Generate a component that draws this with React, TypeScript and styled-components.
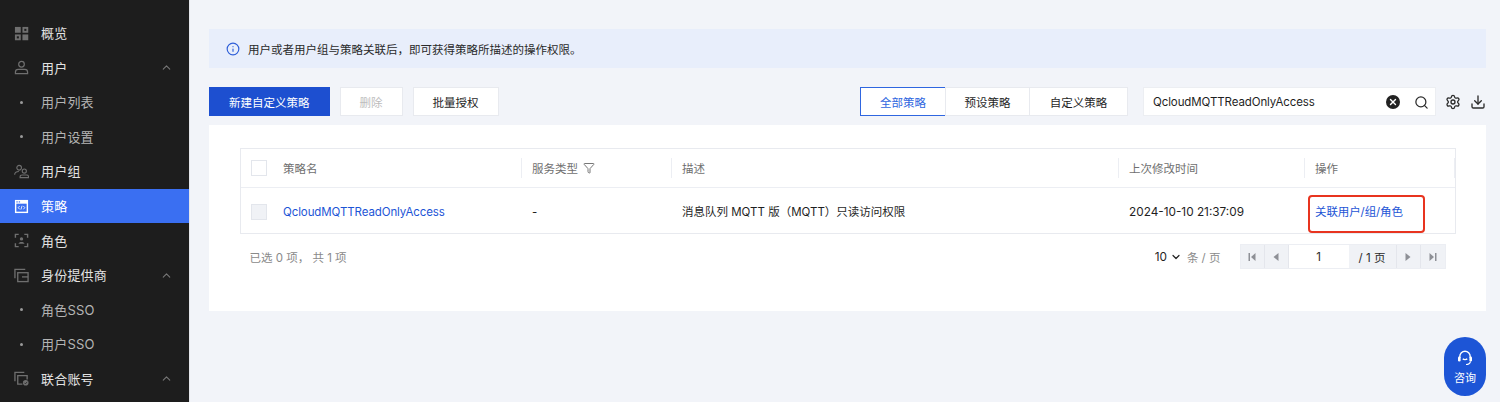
import React from "react";
import styled, { createGlobalStyle } from "styled-components";
import { ChevronUp, ChevronDown, Search, Settings, Download, Filter, Info, X } from "lucide-react";

const GlobalStyle = createGlobalStyle`
  html, body {
    margin: 0;
    padding: 0;
    height: 402px;
    overflow: hidden;
    background: #f2f4f9;
    font-family: Inter, "Noto Sans CJK SC", sans-serif;
    font-size: 11.5px;
    color: #1f1f1f;
  }
  * { box-sizing: border-box; }
`;

const Page = styled.div`
  display: flex;
  width: 1500px;
  height: 402px;
  position: relative;
  overflow: hidden;
`;

const Sidebar = styled.nav`
  width: 190px;
  flex: none;
  height: 402px;
  padding-top: 16px;
  background: #1d1d1d;
  border-right: 1px solid #e4e6ea;
  overflow: hidden;
`;

const NavRow = styled.div<{ $active?: boolean; $sub?: boolean }>`
  display: flex;
  align-items: center;
  height: 34.55px;
  padding-left: 14px;
  padding-right: 16px;
  gap: 12px;
  font-size: 13px;
  line-height: 18px;
  background: ${(p) => (p.$active ? "#3a6ff2" : "transparent")};
  color: ${(p) => (p.$active ? "#ffffff" : p.$sub ? "#b4b4b4" : "#e2e2e2")};
`;

const NavIcon = styled.svg<{ $active?: boolean }>`
  width: 15px;
  height: 15px;
  flex: none;
  color: ${(p) => (p.$active ? "#ffffff" : "#6f6f6f")};
`;

const NavDot = styled.span`
  width: 15px;
  flex: none;
  display: flex;
  justify-content: center;
  &::before {
    content: "";
    width: 3px;
    height: 3px;
    border-radius: 50%;
    background: #9a9a9a;
  }
`;

const NavLabel = styled.span`
  flex: 1;
  letter-spacing: 0.2px;
`;

const Main = styled.main`
  flex: 1;
  padding: 29px 14px 0 19px;
  min-width: 0;
`;

const Notice = styled.div`
  display: flex;
  align-items: center;
  gap: 8px;
  height: 39px;
  padding-left: 17px;
  background: #e8eefb;
  color: #2a2a2a;
`;

const Toolbar = styled.div`
  display: flex;
  align-items: center;
  height: 29px;
  margin-top: 19px;
  margin-bottom: 9px;
`;

const Button = styled.button<{ $kind?: "primary" | "disabled" }>`
  height: 29px;
  padding: 0 19px;
  margin-right: 10px;
  font: inherit;
  border: 1px solid ${(p) => (p.$kind === "primary" ? "#1d4fd0" : "#e8eaef")};
  background: ${(p) => (p.$kind === "primary" ? "#1d4fd0" : "#ffffff")};
  color: ${(p) => (p.$kind === "primary" ? "#ffffff" : p.$kind === "disabled" ? "#bcbcbc" : "#1f1f1f")};
`;

const Spacer = styled.div`
  flex: 1;
`;

const Segments = styled.div`
  display: flex;
  margin-right: 15px;
`;

const Segment = styled.div<{ $active?: boolean; $width: number }>`
  display: flex;
  align-items: center;
  justify-content: center;
  height: 29px;
  width: ${(p) => p.$width}px;
  background: #ffffff;
  border: 1px solid ${(p) => (p.$active ? "#2f66e0" : "#e8eaef")};
  margin-left: -1px;
  color: ${(p) => (p.$active ? "#2f66e0" : "#1f1f1f")};
`;

const SearchBox = styled.div`
  display: flex;
  align-items: center;
  width: 293px;
  height: 29px;
  padding: 1px 6px 0 9px;
  background: #ffffff;
  border: 1px solid #eceef2;
`;

const SearchText = styled.span`
  flex: 1;
  letter-spacing: -0.1px;
`;

const ClearDot = styled.span`
  display: flex;
  align-items: center;
  justify-content: center;
  width: 14px;
  height: 14px;
  margin-right: 14px;
  border-radius: 50%;
  background: #222222;
  color: #ffffff;
`;

const ToolIcons = styled.div`
  display: flex;
  align-items: center;
  gap: 9px;
  margin-left: 9px;
  color: #2b2b2b;
`;

const Card = styled.section`
  height: 186px;
  background: #ffffff;
  padding: 23px 31px 0;
`;

const Table = styled.div`
  border: 1px solid #e8eaef;
  width: 1216px;
`;

const HeadRow = styled.div`
  display: grid;
  grid-template-columns: 281px 150px 447px 186px 1fr;
  height: 39px;
  border-bottom: 1px solid #eceef3;
  color: #6f6f6f;
`;

const BodyRow = styled.div`
  display: grid;
  grid-template-columns: 281px 150px 447px 186px 1fr;
  height: 45px;
  line-height: 18px;
`;

const HeadCell = styled.div`
  display: flex;
  align-items: center;
  padding-left: 10px;
  position: relative;
  &::after {
    content: "";
    position: absolute;
    right: 0;
    top: 9px;
    bottom: 9px;
    width: 1px;
    background: #eceef3;
  }
`;

const HeadFilter = styled(Filter)`
  margin-left: 5px;
  color: #777777;
`;

const BodyCell = styled.div`
  display: flex;
  align-items: center;
  padding-left: 10px;
  padding-top: 2px;
`;

const DateText = styled.span`
  font-size: 11.8px;
`;

const Check = styled.span<{ $disabled?: boolean }>`
  width: 16px;
  height: 16px;
  margin-right: 16px;
  flex: none;
  border: 1px solid #e3e6ec;
  background: ${(p) => (p.$disabled ? "#f0f2f6" : "#ffffff")};
`;

const LinkText = styled.span`
  color: #1d55d6;
  letter-spacing: -0.1px;
`;

const Highlight = styled.div`
  position: absolute;
  left: 1308px;
  top: 195px;
  width: 117px;
  height: 38px;
  border: 2px solid #e8341f;
  border-radius: 4px;
`;

const Footer = styled.div`
  display: flex;
  align-items: center;
  justify-content: space-between;
  padding: 10px 9.5px 0;
  color: #8a8a8a;
`;

const Pager = styled.div`
  display: flex;
  align-items: center;
`;

const PageSize = styled.div`
  display: flex;
  align-items: center;
  gap: 3px;
  margin-right: 19px;
`;

const PageSizeValue = styled.span`
  color: #1f1f1f;
  font-size: 11.8px;
`;

const PageSizeUnit = styled.span`
  margin-left: 2px;
`;

const PagerBox = styled.div`
  display: flex;
  height: 25px;
  background: #f0f2f6;
  border: 1px solid #eceef3;
  color: #2a2a2a;
`;

const PagerBtn = styled.span`
  width: 24px;
  display: flex;
  align-items: center;
  justify-content: center;
  color: #8e9096;
  border-right: 1px solid #e4e6ec;
  &:last-child {
    border-right: 0;
  }
`;

const PagerInput = styled.span`
  width: 60px;
  display: flex;
  align-items: center;
  justify-content: center;
  background: #ffffff;
`;

const PagerTotal = styled.span`
  width: 48px;
  display: flex;
  align-items: center;
  justify-content: center;
  border-right: 1px solid #e4e6ec;
`;

const Consult = styled.div`
  position: absolute;
  left: 1444px;
  top: 337px;
  width: 42px;
  height: 59px;
  border-radius: 21px;
  background: #1d55d6;
  color: #ffffff;
  font-size: 11px;
  display: flex;
  flex-direction: column;
  align-items: center;
  justify-content: center;
  gap: 2px;
`;

const columns = ["服务类型", "描述", "上次修改时间", "操作"];

const iconPaths: Record<string, React.ReactNode> = {
  overview: (
    <>
      <rect x="1" y="1" width="6.2" height="6.2" fill="currentColor" />
      <rect x="9" y="1" width="6.2" height="6.2" fill="currentColor" />
      <rect x="11" y="3" width="2.2" height="2.2" fill="#1d1d1d" />
      <rect x="1" y="9" width="6.2" height="6.2" fill="currentColor" />
      <rect x="3" y="11" width="2.2" height="2.2" fill="#1d1d1d" />
      <rect x="9" y="9" width="6.2" height="6.2" fill="currentColor" />
    </>
  ),
  user: (
    <>
      <circle cx="8" cy="4.5" r="3" fill="none" stroke="currentColor" strokeWidth="1.3" />
      <path d="M1.5 14.5v-1.5c0-1.6 1.2-3 3-3h7c1.8 0 3 1.4 3 3v1.500z" fill="none" stroke="currentColor" strokeWidth="1.3" />
    </>
  ),
  group: (
    <>
      <circle cx="5.5" cy="4" r="2.5" fill="none" stroke="currentColor" strokeWidth="1.2" />
      <path d="M.7 11.500c0-2 1.500-3.500 4.500-3.500" fill="none" stroke="currentColor" strokeWidth="1.2" />
      <circle cx="11" cy="7.500" r="2.200" fill="none" stroke="currentColor" strokeWidth="1.2" />
      <path d="M6.500 14.500v-1c0-1 1-1.800 2.200-1.800h4.600c1.200 0 2.200.8 2.200 1.800v1z" fill="none" stroke="currentColor" strokeWidth="1.2" />
    </>
  ),
  policy: (
    <>
      <rect x="1" y="1" width="14" height="14" fill="currentColor" />
      <rect x="2.5" y="5" width="11" height="8.500" fill="#3a6ff2" />
      <rect x="2.500" y="2.500" width="1.500" height="1.200" fill="#3a6ff2" />
      <rect x="5" y="2.500" width="1.500" height="1.200" fill="#3a6ff2" />
      <path d="M6 7.500 4.500 9.200 6 11M10 7.500l1.500 1.700L10 11M8.600 7.200 7.400 11.200" fill="none" stroke="#fff" strokeWidth=".9" />
    </>
  ),
  role: (
    <>
      <path d="M1.500 5V1.500h3.500M11 1.500h3.500V5M14.500 11v3.500H11M5 14.500H1.500V11" fill="none" stroke="currentColor" strokeWidth="1.500" />
      <circle cx="8" cy="6.300" r="1.800" fill="currentColor" />
      <path d="M4.800 11.500c.3-1.500 1.500-2 3.200-2s2.900.5 3.200 2z" fill="currentColor" />
    </>
  ),
  idp: (
    <>
      <path d="M1 11V1.500h11" fill="none" stroke="currentColor" strokeWidth="1.400" />
      <rect x="4" y="5" width="11" height="9.500" fill="none" stroke="currentColor" strokeWidth="1.400" />
      <path d="M8.500 9.500h6.500" stroke="currentColor" strokeWidth="1.400" />
    </>
  ),
  org: (
    <>
      <path d="M1 11V1.500h10" fill="none" stroke="currentColor" strokeWidth="1.400" />
      <path d="M9 14H4V5h10v4" fill="none" stroke="currentColor" strokeWidth="1.400" />
      <circle cx="12.500" cy="12.500" r="3" fill="currentColor" />
      <path d="M11 12.500l1.200 1.200 1.900-2.200" fill="none" stroke="#1d1d1d" strokeWidth=".8" />
    </>
  ),
};

type NavItem = { label: string; icon?: string; sub?: boolean; open?: boolean; active?: boolean };

const navItems: NavItem[] = [
  { label: "概览", icon: "overview" },
  { label: "用户", icon: "user", open: true },
  { label: "用户列表", sub: true },
  { label: "用户设置", sub: true },
  { label: "用户组", icon: "group" },
  { label: "策略", icon: "policy", active: true },
  { label: "角色", icon: "role" },
  { label: "身份提供商", icon: "idp", open: true },
  { label: "角色SSO", sub: true },
  { label: "用户SSO", sub: true },
  { label: "联合账号", icon: "org", open: true },
];

const pagerPaths = {
  first: "M1.500 1h1.500v8H1.500zM8.500 1v8L4 5z",
  prev: "M7.500 1v8L2.500 5z",
  next: "M2.500 1v8l5-4z",
  last: "M7 1h1.500v8H7zM1.500 1v8L6 5z",
};

function PagerIcon({ name }: { name: keyof typeof pagerPaths }) {
  return (
    <svg width="10" height="10" viewBox="0 0 10 10" fill="currentColor">
      <path d={pagerPaths[name]} />
    </svg>
  );
}

export default function App() {
  return (
    <Page>
      <GlobalStyle />
      <Sidebar>
        {navItems.map((item) => (
          <NavRow key={item.label} $active={item.active} $sub={item.sub}>
            {item.icon ? (
              <NavIcon viewBox="0 0 16 16" $active={item.active}>
                {iconPaths[item.icon]}
              </NavIcon>
            ) : (
              <NavDot />
            )}
            <NavLabel>{item.label}</NavLabel>
            {item.open && <ChevronUp size={13} color="#777" />}
          </NavRow>
        ))}
      </Sidebar>
      <Main>
        <Notice>
          <Info size={14} color="#2f5fd8" />
          用户或者用户组与策略关联后，即可获得策略所描述的操作权限。
        </Notice>
        <Toolbar>
          <Button $kind="primary">新建自定义策略</Button>
          <Button $kind="disabled">删除</Button>
          <Button>批量授权</Button>
          <Spacer />
          <Segments>
            <Segment $active $width={86}>全部策略</Segment>
            <Segment $width={85}>预设策略</Segment>
            <Segment $width={99}>自定义策略</Segment>
          </Segments>
          <SearchBox>
            <SearchText>QcloudMQTTReadOnlyAccess</SearchText>
            <ClearDot>
              <X size={10} strokeWidth={3.2} />
            </ClearDot>
            <Search size={15} color="#2b2b2b" />
          </SearchBox>
          <ToolIcons>
            <Settings size={16} />
            <Download size={16} />
          </ToolIcons>
        </Toolbar>
        <Card>
          <Table>
            <HeadRow>
              <HeadCell>
                <Check />
                策略名
              </HeadCell>
              {columns.map((c) => (
                <HeadCell key={c}>
                  {c}
                  {c === "服务类型" && <HeadFilter size={12} />}
                </HeadCell>
              ))}
            </HeadRow>
            <BodyRow>
              <BodyCell>
                <Check $disabled />
                <LinkText>QcloudMQTTReadOnlyAccess</LinkText>
              </BodyCell>
              <BodyCell>-</BodyCell>
              <BodyCell>消息队列 MQTT 版（MQTT）只读访问权限</BodyCell>
              <BodyCell>
                <DateText>2024-10-10 21:37:09</DateText>
              </BodyCell>
              <BodyCell>
                <LinkText>关联用户/组/角色</LinkText>
              </BodyCell>
            </BodyRow>
          </Table>
          <Footer>
            <span>已选 0 项， 共 1 项</span>
            <Pager>
              <PageSize>
                <PageSizeValue>10</PageSizeValue>
                <ChevronDown size={12} color="#222" strokeWidth={2.4} />
                <PageSizeUnit>条 / 页</PageSizeUnit>
              </PageSize>
              <PagerBox>
                <PagerBtn>
                  <PagerIcon name="first" />
                </PagerBtn>
                <PagerBtn>
                  <PagerIcon name="prev" />
                </PagerBtn>
                <PagerInput>1</PagerInput>
                <PagerTotal>/ 1 页</PagerTotal>
                <PagerBtn>
                  <PagerIcon name="next" />
                </PagerBtn>
                <PagerBtn>
                  <PagerIcon name="last" />
                </PagerBtn>
              </PagerBox>
            </Pager>
          </Footer>
        </Card>
      </Main>
      <Highlight />
      <Consult>
        <svg width="18" height="18" viewBox="0 0 18 18" fill="none" stroke="#fff" strokeWidth="1.4">
          <path d="M3.800 9V7.500a5.200 5.200 0 0 1 10.400 0V9" />
          <rect x="2" y="7.500" width="2.600" height="5" rx="1.200" fill="#fff" stroke="none" />
          <rect x="13.400" y="7.500" width="2.600" height="5" rx="1.200" fill="#fff" stroke="none" />
          <path d="M6.800 9.800c1 1.100 3.400 1.100 4.400 0" />
          <path d="M14.500 12.500c-.5 2-2.200 3-4.500 3" strokeWidth="1.100" />
        </svg>
        咨询
      </Consult>
    </Page>
  );
}
